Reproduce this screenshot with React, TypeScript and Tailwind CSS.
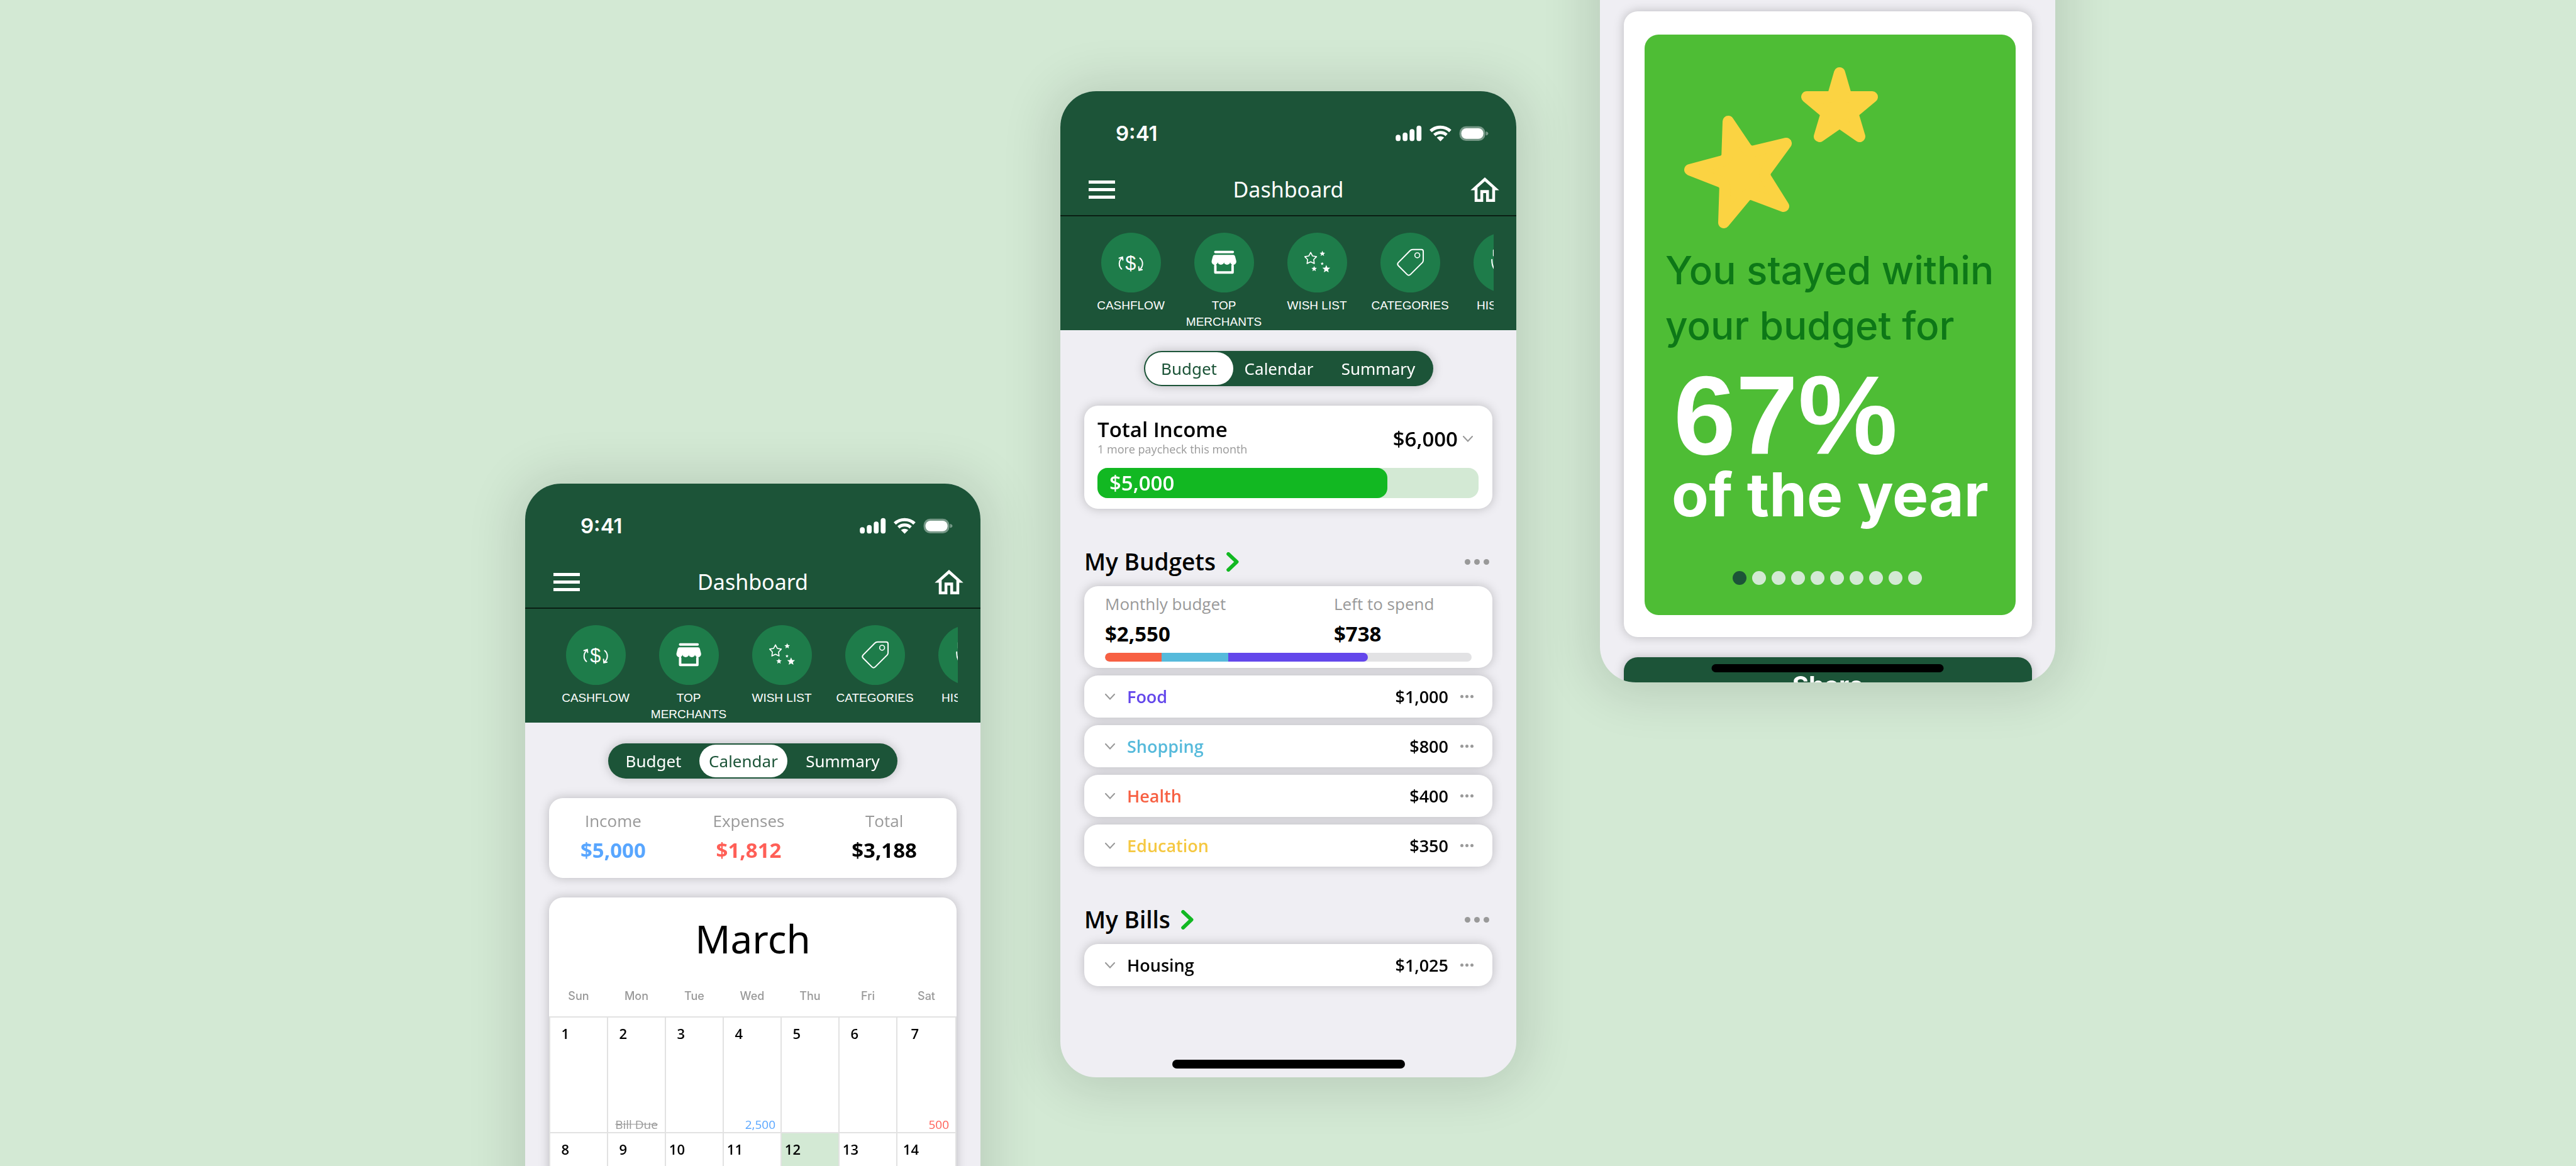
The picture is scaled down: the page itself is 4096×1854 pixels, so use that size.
import React from "react";

type Point = [number, number];

const cardShadow = "drop-shadow-[0_0_8px_rgba(0,0,0,0.22)]";

/* Five-pointed star as an SVG points list. */
function starPoints(cx: number, cy: number, r: number, inner = 0.45) {
  return Array.from({ length: 10 }, (_, i) => {
    const radius = i % 2 === 0 ? r : r * inner;
    const angle = (Math.PI / 5) * i - Math.PI / 2;
    return `${cx + radius * Math.cos(angle)},${cy + radius * Math.sin(angle)}`;
  }).join(" ");
}

/* Closed path whose odd vertices (the inner corners of a star) are softened. */
function softStar(points: Point[], soft: number) {
  const n = points.length;
  const toward = (from: Point, to: Point): Point => {
    const d = Math.hypot(to[0] - from[0], to[1] - from[1]);
    return [from[0] + ((to[0] - from[0]) * soft) / d, from[1] + ((to[1] - from[1]) * soft) / d];
  };
  return (
    points
      .map((p, i) => {
        if (i % 2 === 0) return `${i === 0 ? "M" : "L"}${p.join(" ")}`;
        const a = toward(p, points[i - 1]);
        const b = toward(p, points[(i + 1) % n]);
        return `L${a.join(" ")}Q${p.join(" ")} ${b.join(" ")}`;
      })
      .join("") + "Z"
  );
}

const bigStar: Point[] = [
  [71, 86], [104, 135], [163, 121], [127, 170], [159, 221],
  [103, 200], [64, 247], [66, 185], [10, 163], [69, 147],
];
const smallStar: Point[] = [
  [248, 9], [259, 47], [300, 47], [269, 73], [280, 110],
  [248, 88], [216, 110], [227, 73], [196, 47], [237, 47],
];

function StatusIcons() {
  return (
    <svg viewBox="72 40 454 80" className="h-[26px] w-[148px]" fill="white" role="img" aria-label="Signal, Wi-Fi and battery">
      <rect x="72" y="87" width="24" height="31" rx="12" />
      <rect x="106" y="76" width="24" height="42" rx="12" />
      <rect x="140" y="59" width="24" height="59" rx="12" />
      <rect x="174" y="42" width="24" height="76" rx="12" />
      <path d="M243 69A70 70 0 0 1 339 69" fill="none" stroke="white" strokeWidth="16" />
      <path d="M261 88A44 44 0 0 1 321 88" fill="none" stroke="white" strokeWidth="15" />
      <path d="M273 101Q291 88 309 101L291 119Z" />
      <rect x="384" y="45" width="126" height="72" rx="32" opacity="0.4" />
      <rect x="393" y="55" width="108" height="52" rx="25" />
      <path d="M513 71Q525 74 525 81Q525 88 513 91Z" opacity="0.4" />
    </svg>
  );
}

const shortcuts = [
  {
    label: "CASHFLOW",
    box: "18 24 290 291",
    icon: (
      <g>
        <text x="161" y="204" fontSize="94" textAnchor="middle" fill="white" fontFamily="Liberation Sans, sans-serif">$</text>
        <g fill="none" stroke="white" strokeWidth="6" strokeLinecap="round">
          <path d="M117 201C100 186 103 160 119 147M105 148L121 143L123 157" />
          <path d="M206 148C223 162 223 188 205 204M200 190L202 207L217 204" />
        </g>
      </g>
    ),
  },
  {
    label: "TOP MERCHANTS",
    box: "471 24 290 291",
    icon: (
      <g fill="white">
        <rect x="567" y="112" width="97" height="12" rx="6" />
        <path d="M570 132H660Q667 132 669 139L675 162A15 15 0 0 1 645 168A15 12 0 0 1 615 168A15 12 0 0 1 585 168A15 15 0 0 1 555 162L561 139Q563 132 570 132Z" />
        <path d="M573 184V218H657V184" fill="none" stroke="white" strokeWidth="12" strokeLinecap="round" strokeLinejoin="round" />
      </g>
    ),
  },
  {
    label: "WISH LIST",
    box: "23 24 290 291",
    icon: (
      <g fill="white">
        <polygon points={starPoints(136, 150, 30, 0.52)} fill="none" stroke="white" strokeWidth="5" strokeLinejoin="round" />
        <polygon points={starPoints(193, 126, 14)} />
        <polygon points={starPoints(192, 175, 8)} />
        <polygon points={starPoints(153, 200, 14)} />
        <polygon points={starPoints(212, 201, 20)} />
      </g>
    ),
  },
  {
    label: "CATEGORIES",
    box: "477 24 290 291",
    icon: (
      <g fill="none" stroke="white" strokeWidth="6">
        <path d="M634 106H676Q685 106 685 115V158Q685 164 681 169L622 228Q614 235 607 228L563 184Q557 177 563 170L620 112Q626 106 634 106Z" />
        <circle cx="656" cy="134" r="12" strokeWidth="5" />
      </g>
    ),
  },
  {
    label: "HISTORY",
    box: "930 24 290 291",
    icon: (
      <path d="M1027 109V136M1019 155Q1018 185 1034 206" fill="none" stroke="white" strokeWidth="6" strokeLinecap="round" />
    ),
  },
];

function AppHeader() {
  return (
    <header className="bg-[#1c5438] text-white">
      <div className="flex h-[134px] items-center justify-between pr-[44px] pl-[88px]">
        <span className="font-[Inter,sans-serif] text-[33px] leading-10 font-semibold">9:41</span>
        <StatusIcons />
      </div>
      <nav className="grid h-[65px] grid-cols-[1fr_auto_1fr] items-center border-b-2 border-[#0a1f14] px-[27px] pb-5">
        <button type="button" aria-label="Menu" className="ml-[18px] flex w-[42px] flex-col gap-[7px]">
          <span className="h-[5px] bg-white" />
          <span className="h-[5px] bg-white" />
          <span className="h-[5px] bg-white" />
        </button>
        <h1 className="font-['Noto_Sans','Open_Sans',sans-serif] text-[34px] leading-[44px]">Dashboard</h1>
        <button type="button" aria-label="Home" className="justify-self-end">
          <svg viewBox="438 290 140 120" className="block h-[39px] w-[46px]">
            <path
              fill="white"
              fillRule="evenodd"
              d="M508 290L578 353H558V410H514V367H500V410H458V353H438ZM508 309L472 341V396H486V352H528V396H544V341Z"
            />
          </svg>
        </button>
      </nav>
      <ul className="mr-[36px] ml-[38px] flex h-[181px] overflow-hidden pt-[26px]">
        {shortcuts.map((s) => (
          <li key={s.label} className="w-[148px] shrink-0">
            <button type="button" className="flex w-full flex-col items-center gap-2">
              <span className="flex size-[95px] rounded-full bg-[#1e7c4a]">
                <svg viewBox={s.box} className="size-[95px]" aria-hidden="true">{s.icon}</svg>
              </span>
              <span className="w-[128px] text-center font-['Liberation_Sans',sans-serif] text-[19px] leading-[26px]">{s.label}</span>
            </button>
          </li>
        ))}
      </ul>
    </header>
  );
}

function Tabs({ active }: { active: string }) {
  return (
    <div role="tablist" className={`mx-auto mt-[33px] flex h-14 w-[460px] gap-[3px] rounded-full bg-[#1c5438] p-[2px] ${cardShadow}`}>
      {["Budget", "Calendar", "Summary"].map((t) => (
        <button
          key={t}
          type="button"
          role="tab"
          aria-selected={t === active}
          className={`rounded-full font-['Noto_Sans','Open_Sans',sans-serif] text-[26px] leading-9 ${
            t === "Summary" ? "flex-1" : "w-[140px]"
          } ${t === active ? "bg-white text-[#1c5438]" : "text-white"}`}
        >
          {t}
        </button>
      ))}
    </div>
  );
}

function Chevron() {
  return (
    <svg viewBox="0 0 16 10" className="h-[10px] w-4 shrink-0" fill="none" stroke="#999" strokeWidth="2" strokeLinecap="round" aria-hidden="true">
      <path d="M1 1L8 8.500L15 1" />
    </svg>
  );
}

function Dots({ large = false }: { large?: boolean }) {
  const dot = large ? "size-[9px] rounded-full bg-[#999]" : "size-[5px] rounded-full bg-[#999]";
  return (
    <button type="button" aria-label="More" className={large ? "flex gap-[6px]" : "flex gap-[3px]"}>
      <span className={dot} />
      <span className={dot} />
      <span className={dot} />
    </button>
  );
}

function SectionHeading({ title }: { title: string }) {
  return (
    <div className="mt-[59px] mb-[14px] flex h-[50px] items-center justify-between pr-[5px]">
      <h2 className="text-[37px] leading-[50px] font-semibold">
        <a href="#" className="flex items-center gap-[17px]">
          {title}
          <svg viewBox="718 50 60 95" className="h-[31px] w-5" fill="none" stroke="#12b822" strokeWidth="18" strokeLinecap="round" strokeLinejoin="round" aria-hidden="true">
            <path d="M727 59L768 97L727 136" />
          </svg>
        </a>
      </h2>
      <Dots large />
    </div>
  );
}

function BudgetRow({ name, amount, color }: { name: string; amount: string; color: string }) {
  return (
    <li className="flex h-[67px] items-center rounded-[22px] bg-white pr-[30px] pl-[33px] text-[27px] leading-9 font-semibold">
      <button type="button" className="flex items-center gap-[19px]">
        <Chevron />
        <span className={color}>{name}</span>
      </button>
      <span className="mr-[19px] ml-auto">{amount}</span>
      <Dots />
    </li>
  );
}

const budgets = [
  { name: "Food", amount: "$1,000", color: "text-[#6347eb]" },
  { name: "Shopping", amount: "$800", color: "text-[#56badb]" },
  { name: "Health", amount: "$400", color: "text-[#f76043]" },
  { name: "Education", amount: "$350", color: "text-[#f5c842]" },
];

const phoneShadow = "shadow-[0_4px_80px_16px_rgba(0,0,0,0.12)]";

function BudgetPhone() {
  return (
    <section className={`relative col-start-4 mt-[145px] h-[1568px] overflow-hidden rounded-[57px] bg-[#efeef3] ${phoneShadow}`}>
      <AppHeader />
      <Tabs active="Budget" />
      <main className="mx-[38px]">
        <div className={`mt-[31px] rounded-[22px] bg-white pt-[18px] pr-[22px] pb-[17px] pl-[21px] ${cardShadow}`}>
          <div className="flex items-center justify-between">
            <div>
              <h2 className="text-[33px] leading-10 font-semibold">Total Income</h2>
              <p className="text-lg leading-[22px] text-[#999]">1 more paycheck this month</p>
            </div>
            <button type="button" className="flex items-center gap-2 pt-2 pr-[9px] text-[33px] leading-10 font-semibold">
              $6,000
              <Chevron />
            </button>
          </div>
          <div className="mt-[19px] h-12 rounded-2xl bg-[#d3e9d4]">
            <div className="flex h-full w-[76%] items-center rounded-2xl bg-[#12b822] pl-[19px] text-[33px] leading-10 font-semibold text-white">$5,000</div>
          </div>
        </div>

        <SectionHeading title="My Budgets" />
        <ul className={`flex flex-col gap-3 ${cardShadow}`}>
          <li className="rounded-[22px] bg-white px-[33px] pt-[10px] pb-[10px]">
            <dl className="grid grid-cols-[364fr_219fr]">
              <div>
                <dt className="text-[26px] leading-9 text-[#999]">Monthly budget</dt>
                <dd className="mt-2 text-[33px] leading-[44px] font-bold">$2,550</dd>
              </div>
              <div>
                <dt className="text-[26px] leading-9 text-[#999]">Left to spend</dt>
                <dd className="mt-2 text-[33px] leading-[44px] font-bold">$738</dd>
              </div>
            </dl>
            <div className="mt-2 h-[14px] overflow-hidden rounded-full bg-[#e2e2e4]">
              <div className="flex h-full w-[71.7%] overflow-hidden rounded-full">
                <span className="w-[21.5%] bg-[#f76043]" />
                <span className="w-[25.3%] bg-[#56badb]" />
                <span className="flex-1 bg-[#6347eb]" />
              </div>
            </div>
          </li>
          {budgets.map((b) => (
            <BudgetRow key={b.name} {...b} />
          ))}
        </ul>

        <SectionHeading title="My Bills" />
        <ul className={cardShadow}>
          <BudgetRow name="Housing" amount="$1,025" color="text-black" />
        </ul>
      </main>
      <div className="absolute bottom-[14px] left-1/2 h-[14px] w-[370px] -translate-x-1/2 rounded-full bg-black" />
    </section>
  );
}

const totals = [
  { label: "Income", amount: "$5,000", color: "text-[#58a6ff]" },
  { label: "Expenses", amount: "$1,812", color: "text-[#ff5f57]" },
  { label: "Total", amount: "$3,188", color: "text-black" },
];

const weekdays = ["Sun", "Mon", "Tue", "Wed", "Thu", "Fri", "Sat"];
const weeks = [
  [1, 2, 3, 4, 5, 6, 7],
  [8, 9, 10, 11, 12, 13, 14],
];
const events: Record<number, { text: string; style: string }> = {
  2: { text: "Bill Due", style: "text-center text-[#999] line-through" },
  4: { text: "2,500", style: "pr-[8px] text-right text-[#58a6ff]" },
  7: { text: "500", style: "pr-[10px] text-right text-[#ff5f57]" },
};

function CalendarPhone() {
  return (
    <section className={`col-start-2 mt-[769px] h-[1568px] overflow-hidden rounded-[57px] bg-[#efeef3] ${phoneShadow}`}>
      <AppHeader />
      <Tabs active="Calendar" />
      <main className="mx-[38px]">
        <dl className={`mt-[31px] flex justify-between rounded-[22px] bg-white pt-[18px] pr-[63px] pb-[22px] pl-[50px] text-center ${cardShadow}`}>
          {totals.map((t) => (
            <div key={t.label}>
              <dt className="text-[26px] leading-9 text-[#999]">{t.label}</dt>
              <dd className={`mt-[7px] text-[33px] leading-[44px] font-bold ${t.color}`}>{t.amount}</dd>
            </div>
          ))}
        </dl>
        <div className={`mt-[31px] overflow-hidden rounded-t-[22px] bg-white pt-[23px] ${cardShadow}`}>
          <h2 className="text-center font-['Noto_Sans','Open_Sans',sans-serif] text-[62px] leading-[84px]">March</h2>
          <table className="w-full table-fixed border-collapse">
            <thead>
              <tr>
                {weekdays.map((d) => (
                  <th key={d} className={`h-[83px] pb-5 align-bottom font-[Inter,sans-serif] text-lg leading-6 font-medium text-[#999] ${d === "Sat" ? "" : "w-[92px]"}`}>
                    {d}
                  </th>
                ))}
              </tr>
            </thead>
            <tbody>
              {weeks.map((week) => (
                <tr key={week[0]}>
                  {week.map((day) => (
                    <td key={day} className={`border-2 border-[#e2e2e2] p-0 ${day === 12 ? "bg-[#d3e9d4]" : ""}`}>
                      <div className="flex h-[182px] flex-col justify-between pt-[10px]">
                        <span className={`text-right text-[22px] leading-[30px] font-semibold ${day % 7 === 0 ? "w-[34px]" : "w-[30px]"}`}>{day}</span>
                        {events[day] && <span className={`text-[19px] leading-6 ${events[day].style}`}>{events[day].text}</span>}
                      </div>
                    </td>
                  ))}
                </tr>
              ))}
            </tbody>
          </table>
        </div>
      </main>
    </section>
  );
}

function RecapPhone() {
  return (
    <section className={`relative col-start-6 -mt-[100px] h-[1185px] overflow-hidden rounded-b-[57px] bg-[#efeef3] pt-[118px] pr-[37px] pl-[38px] ${phoneShadow}`}>
      <article className={`rounded-[22px] bg-white pt-[37px] pr-[26px] pb-[35px] pl-[33px] ${cardShadow}`}>
        <div className="flex h-[923px] flex-col rounded-[22px] bg-[#4ebd35] pt-[52px] font-[Inter,sans-serif]">
          <svg viewBox="0 0 310 257" className="ml-[62px] h-[257px] w-[310px] shrink-0" fill="#fbd342" stroke="#fbd342" strokeWidth="18" strokeLinejoin="round" aria-hidden="true">
            <path d={softStar(bigStar, 8)} />
            <path d={softStar(smallStar, 6)} />
          </svg>
          <p className="mt-[22px] ml-[33px] text-[62px] leading-[88px] font-medium whitespace-nowrap text-[#0d7817]">
            You stayed within
            <br />
            your budget for
          </p>
          <p className="mt-[28px] ml-[46px] font-['Liberation_Sans',sans-serif] text-[178px] leading-[142px] font-bold text-white">67%</p>
          <p className="ml-[43px] text-[96px] leading-[108px] font-bold whitespace-nowrap text-white">of the year</p>
          <div className="mt-auto mb-12 flex justify-center gap-[9px] pr-[9px]">
            {Array.from({ length: 10 }, (_, i) => (
              <button key={i} type="button" aria-label={`Page ${i + 1}`} className={`size-[22px] rounded-full ${i === 0 ? "bg-[#1c5438]" : "bg-[#d3e9d4]"}`} />
            ))}
          </div>
        </div>
      </article>
      <button type="button" className={`mt-8 h-[90px] w-full rounded-[22px] bg-[#1c5438] font-[Inter,sans-serif] text-[40px] leading-[48px] font-bold text-white ${cardShadow}`}>
        Share
      </button>
      <div className="absolute bottom-4 left-1/2 h-[13px] w-[369px] -translate-x-1/2 rounded-full bg-black" />
    </section>
  );
}

export default function App() {
  return (
    <div className="grid h-screen grid-cols-[835fr_724fr_127fr_725fr_133fr_724fr_828fr] items-start overflow-hidden bg-[#d3e9d4] font-['Open_Sans',sans-serif] text-black">
      <CalendarPhone />
      <BudgetPhone />
      <RecapPhone />
    </div>
  );
}
